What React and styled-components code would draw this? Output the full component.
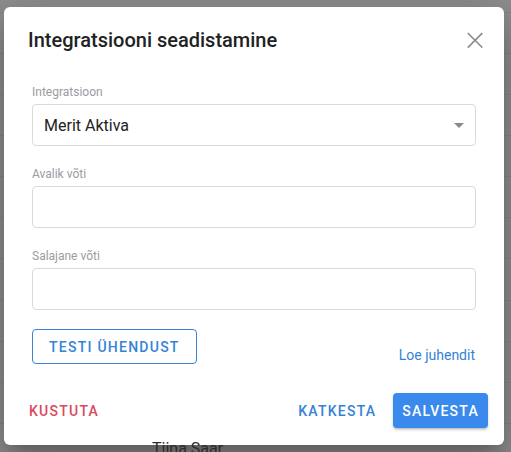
import React from 'react'
import styled, {createGlobalStyle} from 'styled-components'

const GlobalStyle = createGlobalStyle`
  html, body {
    margin: 0;
    padding: 0;
    background: #8e8e8e;
    font-family: Roboto, "Noto Sans", "Liberation Sans", sans-serif;
    -webkit-font-smoothing: antialiased;
  }
  * {
    box-sizing: border-box;
  }
`

const Page = styled.div`
  position: relative;
  width: 511px;
  height: 452px;
  overflow: hidden;
  background: #8e8e8e;
`

const Backdrop = styled.div`
  display: flex;
  flex-direction: column;
  padding-top: 11.6px;
`

const BackdropRow = styled.div`
  height: 41.15px;
  flex-shrink: 0;
  border-top: 1px solid #858585;
`

const GhostText = styled.span`
  position: absolute;
  left: 152px;
  top: 441px;
  z-index: 2;
  font-size: 16px;
  line-height: 16px;
  color: #2b2b2b;
`

const Dialog = styled.div`
  position: absolute;
  left: 4px;
  top: 7px;
  width: 500px;
  display: flex;
  flex-direction: column;
  background: #fff;
  border-radius: 6px;
  box-shadow: 0 11px 15px -7px rgba(0, 0, 0, 0.2),
    0 24px 38px 3px rgba(0, 0, 0, 0.14), 0 9px 46px 8px rgba(0, 0, 0, 0.12);
`

const Header = styled.div`
  display: flex;
  align-items: center;
  justify-content: space-between;
  padding: 21px 17px 0 24px;
`

const Title = styled.h2`
  margin: 0;
  font-size: 20px;
  line-height: 24px;
  font-weight: 500;
  color: #222;
`

const CloseButton = styled.button`
  display: flex;
  width: 24px;
  height: 24px;
  padding: 0;
  border: 0;
  background: none;
  color: #8b8b8b;
  cursor: pointer;
`

const Body = styled.div`
  display: flex;
  flex-direction: column;
  gap: 20px;
  padding: 32px 28px 0 28px;
`

const Field = styled.div`
  display: flex;
  flex-direction: column;
`

const Label = styled.label`
  font-size: 12px;
  line-height: 16px;
  color: #9a9ca2;
  margin-bottom: 4px;
`

const boxStyles = `
  width: 100%;
  height: 42px;
  border: 1px solid #dadada;
  border-radius: 4px;
  background: #fff;
  font-family: inherit;
  font-size: 16px;
  color: #222;
`

const SelectBox = styled.div`
  ${boxStyles}
  display: flex;
  align-items: center;
  justify-content: space-between;
  padding: 0 11px 0 11px;
`

const TextInput = styled.input`
  ${boxStyles}
  padding: 0 11px;
  outline: none;
`

const Actions = styled.div`
  display: flex;
  align-items: flex-end;
  justify-content: space-between;
  padding: 19px 28px 0 28px;
`

const Button = styled.button`
  display: inline-flex;
  align-items: center;
  justify-content: center;
  height: 35px;
  padding: ${p => (p.$variant === 'contained' ? '0 9px' : p.$variant === 'outlined' ? '0 16px' : '0 8px')};
  border: ${p => (p.$variant === 'outlined' ? '1px solid #3a84d6' : '0')};
  border-radius: 4px;
  background: ${p => (p.$variant === 'contained' ? '#3a89ec' : 'transparent')};
  box-shadow: ${p =>
    p.$variant === 'contained'
      ? '0 2px 3px rgba(0,0,0,0.18), 0 1px 1px rgba(0,0,0,0.1)'
      : 'none'};
  color: ${p =>
    p.$variant === 'contained' ? '#fff' : p.$danger ? '#db4862' : '#3583d6'};
  font-family: inherit;
  font-size: 14px;
  font-weight: 500;
  letter-spacing: 1.25px;
  text-transform: uppercase;
  cursor: pointer;
`

const GuideLink = styled.a`
  font-size: 14px;
  line-height: 20px;
  color: #3583d6;
  text-decoration: none;
  margin-right: 1px;
  margin-bottom: -1px;
`

const Footer = styled.div`
  display: flex;
  align-items: center;
  padding: 29px 16px 17px 17px;
`

const FooterRight = styled.div`
  display: flex;
  align-items: center;
  gap: 9px;
  margin-left: auto;
`

const CloseIcon = () => (
  <svg width="24" height="24" viewBox="0 0 24 24" fill="none">
    <path
      d="M5.3 5.6L18.7 19M18.7 5.6L5.3 19"
      stroke="currentColor"
      strokeWidth="1.6"
      strokeLinecap="square"
    />
  </svg>
)

const DropArrow = () => (
  <svg width="10" height="5" viewBox="0 0 10 5">
    <path d="M0 0L5 5L10 0Z" fill="#8a8a8a" />
  </svg>
)

const fields = [
  {label: 'Avalik võti', id: 'public'},
  {label: 'Salajane võti', id: 'secret'}
]

export default function App() {
  return (
    <Page>
      <GlobalStyle />
      <Backdrop>
        {Array.from({length: 11}).map((_, i) => (
          <BackdropRow key={i} />
        ))}
      </Backdrop>
      <Dialog>
        <Header>
          <Title>Integratsiooni seadistamine</Title>
          <CloseButton aria-label="Sulge">
            <CloseIcon />
          </CloseButton>
        </Header>
        <Body>
          <Field>
            <Label>Integratsioon</Label>
            <SelectBox>
              <span>Merit Aktiva</span>
              <DropArrow />
            </SelectBox>
          </Field>
          {fields.map(f => (
            <Field key={f.id}>
              <Label htmlFor={f.id}>{f.label}</Label>
              <TextInput id={f.id} />
            </Field>
          ))}
        </Body>
        <Actions>
          <Button $variant="outlined">Testi ühendust</Button>
          <GuideLink href="#">Loe juhendit</GuideLink>
        </Actions>
        <Footer>
          <Button $danger>Kustuta</Button>
          <FooterRight>
            <Button>Katkesta</Button>
            <Button $variant="contained">Salvesta</Button>
          </FooterRight>
        </Footer>
      </Dialog>
      <GhostText>Tiina Saar</GhostText>
    </Page>
  )
}
